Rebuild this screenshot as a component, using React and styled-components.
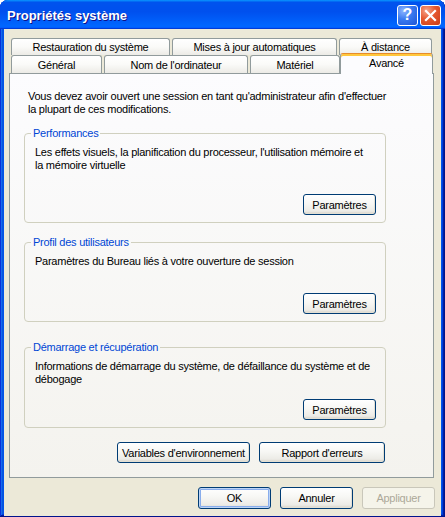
import React from 'react';
import styled, { createGlobalStyle, css } from 'styled-components';

const GlobalStyle = createGlobalStyle`
  html, body { margin: 0; padding: 0; background: #ffffff; }
  body {
    font-family: "Liberation Sans", Arial, sans-serif;
    font-size: 11px;
    letter-spacing: -0.25px;
    color: #000;
  }
`;

const Window = styled.div`
  width: 445px;
  height: 517px;
  box-sizing: border-box;
  display: flex;
  flex-direction: column;
  background: #0055ea;
  border-radius: 8px 8px 0 0;
  overflow: hidden;
  box-shadow: inset -1px -1px #00138c, inset 1px 1px #0831d9,
    inset -2px -2px #001ea0, inset 2px 2px #166aee,
    inset -3px -3px #003bda, inset 3px 3px #0855dd;
`;

const TitleBar = styled.div`
  height: 29px;
  flex: none;
  display: flex;
  align-items: center;
  padding: 0 4px 0 7px;
  background: linear-gradient(180deg, #0997ff, #0053ee 8%, #0050ee 40%, #0066ff 88%, #0066ff 93%, #005bff 95%, #003dd7 96%, #003dd7);
`;

const Title = styled.div`
  flex: 1;
  color: #fff;
  font-weight: bold;
  font-size: 13px;
  letter-spacing: 0;
  text-shadow: 1px 1px #0f1089;
  padding-top: 1px;
`;

const Controls = styled.div`
  display: flex;
  gap: 2px;
  padding-top: 1px;
`;

const CtlButton = styled.div`
  width: 21px;
  height: 21px;
  box-sizing: border-box;
  border: 1px solid #fff;
  border-radius: 3px;
  display: flex;
  align-items: center;
  justify-content: center;
  color: #fff;
  font-weight: bold;
  font-size: 16px;
  letter-spacing: 0;
  ${p => p.$close
    ? css`background: radial-gradient(circle at 30% 25%, #f6a58b, #e5582e 45%, #cc3c17 100%);`
    : css`background: radial-gradient(circle at 30% 25%, #8fb6ff, #3a7af0 45%, #1d54d6 100%);`}
`;

const Body = styled.div`
  flex: 1;
  margin: 0 4px 4px;
  background: #ece9d8;
  padding: 9px 7px 7px 5px;
  display: flex;
  flex-direction: column;
`;

const TabRow = styled.div`
  display: flex;
  align-items: flex-end;
  gap: 2px;
  padding-left: 2px;
  height: ${p => p.$h}px;
  flex: none;
`;

const Tab = styled.div`
  box-sizing: border-box;
  width: ${p => p.$w}px;
  height: ${p => p.$h}px;
  display: flex;
  align-items: center;
  justify-content: center;
  white-space: nowrap;
  border: 1px solid #919b9c;
  border-bottom: none;
  border-radius: 3px 3px 0 0;
  background: linear-gradient(180deg, #ffffff, #fafaf8 50%, #ecebe6);
  ${p => p.$selected && css`
    position: relative;
    z-index: 1;
    height: 21px;
    margin: 0 -1px -1px -2px;
    align-items: flex-start;
    padding-top: 3px;
    background: #fcfcfe;
    border-top: 1px solid #e68b2c;
    box-shadow: inset 0 2px #ffc73c;
  `}
`;

const Panel = styled.div`
  flex: 1;
  border: 1px solid #919b9c;
  background: linear-gradient(180deg, #fcfcfe, #f4f3ee);
  padding: 16px 0 0 14px;
  display: flex;
  flex-direction: column;
`;

const Intro = styled.p`
  margin: 0 0 11px;
  padding-left: 4px;
  line-height: 13px;
`;

const Group = styled.fieldset`
  width: 362px;
  box-sizing: border-box;
  margin: 0 0 ${p => p.$gap}px;
  padding: 0;
  border: 1px solid #d0d0bf;
  border-radius: 4px;
  min-inline-size: 0;
`;

const Legend = styled.legend`
  margin-left: 6px;
  padding: 0 2px;
  line-height: 13px;
  color: #0046d5;
`;

const GroupContent = styled.div`
  box-sizing: border-box;
  height: ${p => p.$h}px;
  display: flex;
  flex-direction: column;
  padding: 6px 9px 7px 10px;
`;

const Description = styled.p`
  margin: 0;
  line-height: 13px;
`;

const ButtonRow = styled.div`
  display: flex;
  justify-content: flex-end;
  gap: 9px;
  margin-top: auto;
  ${p => p.$width && css`width: ${p.$width}px;`}
`;

const Button = styled.button`
  width: ${p => p.$w}px;
  height: ${p => p.$h || 21}px;
  box-sizing: border-box;
  padding: 0;
  font: inherit;
  letter-spacing: -0.25px;
  color: #000;
  border: 1px solid #003c74;
  border-radius: 3px;
  white-space: nowrap;
  background: linear-gradient(180deg, #ffffff 0%, #f7f7f4 45%, #ecebe6 85%, #d6d0c5 100%);
  box-shadow: inset -1px -1px #e3e0d4;
  ${p => p.$default && css`
    box-shadow: inset 0 0 0 1px #bcd4f6, inset 0 0 0 2px #89adec;
  `}
  &:disabled {
    color: #aca899;
    border-color: #c9c7ba;
    background: #f5f4ea;
    box-shadow: none;
  }
`;

const DialogButtons = styled.div`
  display: flex;
  justify-content: flex-end;
  gap: 9px;
  margin: 9px -1px 0 0;
  flex: none;
`;

const PanelFoot = styled.div`
  height: 14px;
`;

const groups = [
  {
    title: 'Performances',
    h: 82,
    gap: 13,
    lines: ["Les effets visuels, la planification du processeur, l'utilisation mémoire et", 'la mémoire virtuelle'],
  },
  {
    title: 'Profil des utilisateurs',
    h: 72,
    gap: 19,
    lines: ['Paramètres du Bureau liés à votre ouverture de session'],
  },
  {
    title: 'Démarrage et récupération',
    h: 73,
    gap: 14,
    lines: ['Informations de démarrage du système, de défaillance du système et de', 'débogage'],
  },
];

export default function App() {
  return (
    <>
      <GlobalStyle />
      <Window>
        <TitleBar>
          <Title>Propriétés système</Title>
          <Controls>
            <CtlButton>?</CtlButton>
            <CtlButton $close>
              <svg width="13" height="13" viewBox="0 0 13 13">
                <path d="M2 2 L11 11 M11 2 L2 11" stroke="#fff" strokeWidth="2.2" strokeLinecap="square" />
              </svg>
            </CtlButton>
          </Controls>
        </TitleBar>
        <Body>
          <TabRow $h={17}>
            <Tab $w={159} $h={17}>Restauration du système</Tab>
            <Tab $w={165} $h={17}>Mises à jour automatiques</Tab>
            <Tab $w={93} $h={17}>À distance</Tab>
          </TabRow>
          <TabRow $h={18}>
            <Tab $w={91} $h={18}>Général</Tab>
            <Tab $w={144} $h={18}>Nom de l'ordinateur</Tab>
            <Tab $w={90} $h={18}>Matériel</Tab>
            <Tab $w={93} $h={18} $selected>Avancé</Tab>
          </TabRow>
          <Panel>
            <Intro>
              Vous devez avoir ouvert une session en tant qu'administrateur afin d'effectuer<br />
              la plupart de ces modifications.
            </Intro>
            {groups.map(g => (
              <Group key={g.title} $gap={g.gap}>
                <Legend>{g.title}</Legend>
                <GroupContent $h={g.h}>
                  <Description>
                    {g.lines.map((l, i) => (
                      <React.Fragment key={i}>{i > 0 && <br />}{l}</React.Fragment>
                    ))}
                  </Description>
                  <ButtonRow>
                    <Button $w={73}>Paramètres</Button>
                  </ButtonRow>
                </GroupContent>
              </Group>
            ))}
            <ButtonRow $width={361}>
              <Button $w={133}>Variables d'environnement</Button>
              <Button $w={126}>Rapport d'erreurs</Button>
            </ButtonRow>
            <PanelFoot />
          </Panel>
          <DialogButtons>
            <Button $w={73} $h={22} $default>OK</Button>
            <Button $w={73} $h={22}>Annuler</Button>
            <Button $w={73} $h={22} disabled>Appliquer</Button>
          </DialogButtons>
        </Body>
      </Window>
    </>
  );
}
